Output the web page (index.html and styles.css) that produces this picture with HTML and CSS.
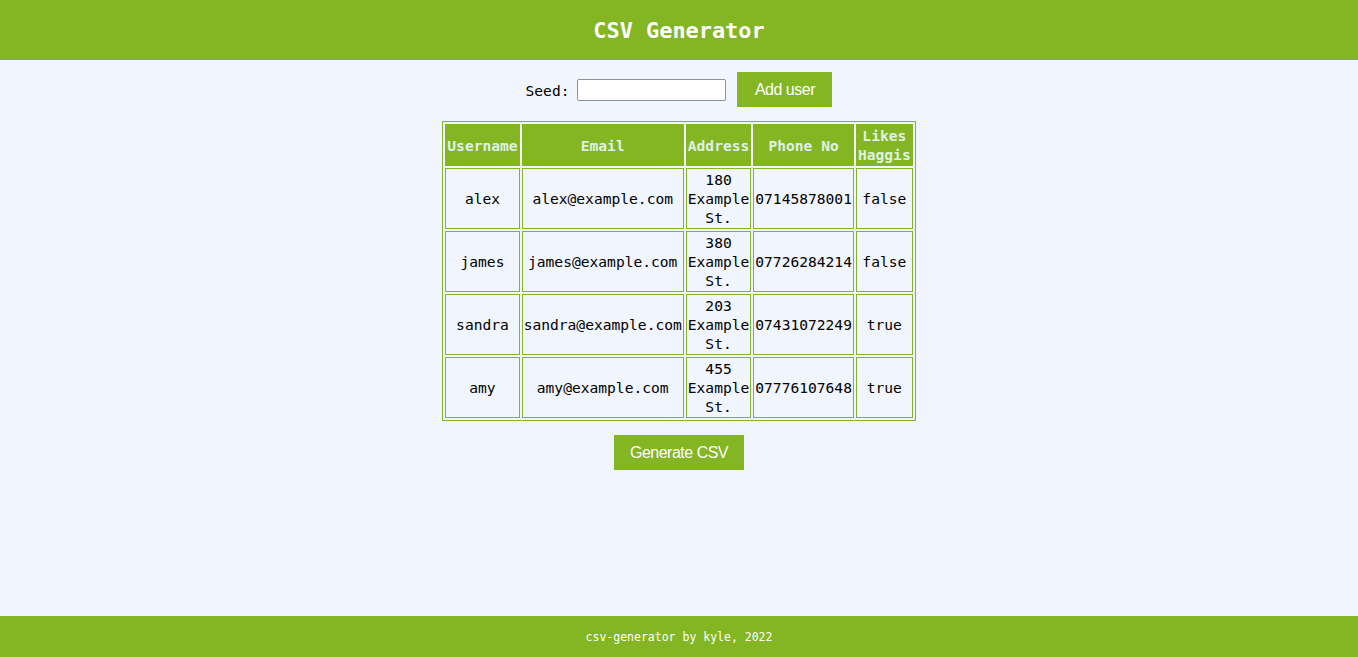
FILE: index.html
```html
<!DOCTYPE html>
<html>
<head>
<meta charset="utf-8">
<title>CSV Generator</title>
<link rel="stylesheet" href="styles.css">
</head>
<body>
<div class="page">
  <header class="topbar"><h1 class="title">CSV Generator</h1></header>
  <main class="content">
    <div class="seed-row">
      <label class="seed-label" for="seed">Seed:</label>
      <input class="seed-input" id="seed" type="text">
      <button class="btn add-btn">Add user</button>
    </div>
    <table class="users">
      <thead>
        <tr><th>Username</th><th>Email</th><th>Address</th><th>Phone No</th><th>Likes Haggis</th></tr>
      </thead>
      <tbody>
        <tr><td>alex</td><td>alex@example.com</td><td>180 Example St.</td><td>07145878001</td><td>false</td></tr>
        <tr><td>james</td><td>james@example.com</td><td>380 Example St.</td><td>07726284214</td><td>false</td></tr>
        <tr><td>sandra</td><td>sandra@example.com</td><td>203 Example St.</td><td>07431072249</td><td>true</td></tr>
        <tr><td>amy</td><td>amy@example.com</td><td>455 Example St.</td><td>07776107648</td><td>true</td></tr>
      </tbody>
    </table>
    <button class="btn gen-btn">Generate CSV</button>
  </main>
  <footer class="footer">csv-generator by kyle, 2022</footer>
</div>
</body>
</html>
```
FILE: styles.css
```css
html, body {
  margin: 0;
  padding: 0;
  height: 100%;
}
body {
  background: #f0f5fe;
  font-family: "DejaVu Sans Mono", monospace;
  color: #000;
}
.page {
  display: flex;
  flex-direction: column;
  min-height: 100%;
}
.topbar {
  background: #84b522;
  height: 60px;
  display: flex;
  align-items: center;
  justify-content: center;
}
.title {
  margin: 0;
  color: #fff;
  font-size: 21.9px;
  font-weight: bold;
}
.content {
  flex: 1;
  display: flex;
  flex-direction: column;
  align-items: center;
  padding-top: 12px;
}
.seed-row {
  display: flex;
  align-items: center;
  height: 35px;
}
.seed-label {
  font-size: 14.6px;
  margin-right: 8px;
  padding-top: 1px;
}
.seed-input {
  width: 149px;
  height: 22px;
  box-sizing: border-box;
  border: 1px solid #8f8f9d;
  border-radius: 2px;
  background: #fff;
  padding: 0 2px;
  margin: 0 11px 0 0;
}
.btn {
  background: #84b522;
  color: #fff;
  border: none;
  font-family: "Liberation Sans", Arial, sans-serif;
  font-size: 16px;
  letter-spacing: -0.5px;
  height: 35px;
  padding: 0;
  cursor: pointer;
}
.add-btn {
  width: 95px;
}
.gen-btn {
  width: 130px;
  margin-top: 14px;
}
.users {
  width: 1px;
  margin-top: 14px;
  border: 1px solid #84b522;
  border-spacing: 2px;
  font-size: 14.6px;
  line-height: 19px;
}
.users th, .users td {
  border: 1px solid #84b522;
  padding: 1px;
  text-align: center;
}
.users th {
  background: #84b522;
  color: #dff2e4;
  font-weight: bold;
}
.footer {
  background: #84b522;
  color: #fff;
  height: 41px;
  display: flex;
  align-items: center;
  justify-content: center;
  font-size: 11.5px;
}
```
